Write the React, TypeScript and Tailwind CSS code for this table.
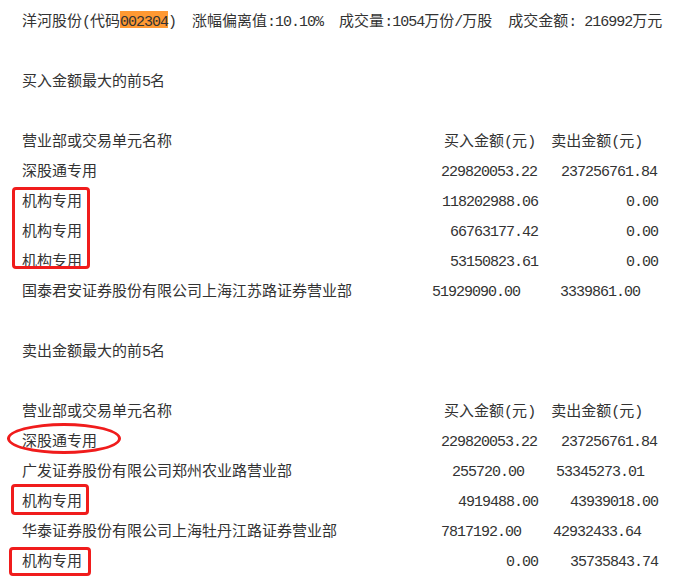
import React from 'react';

// width in "columns": CJK counts as two, ASCII as one
const units = (s: string) => [...s].reduce((n, ch) => n + (ch.charCodeAt(0) > 0x7f ? 2 : 1), 0);

const row = (name: string, buy: string, sell: string) =>
  name + ' '.repeat(65 - units(name) - buy.length) + buy + ' '.repeat(15 - sell.length) + sell;

const header = '营业部或交易单元名称' + ' '.repeat(34) + '买入金额(元)' + '  ' + '卖出金额(元)';

const buyTop = [
  ['深股通专用', '229820053.22', '237256761.84'],
  ['机构专用', '118202988.06', '0.00'],
  ['机构专用', '66763177.42', '0.00'],
  ['机构专用', '53150823.61', '0.00'],
  ['国泰君安证券股份有限公司上海江苏路证券营业部', '51929090.00', '3339861.00'],
];

const sellTop = [
  ['深股通专用', '229820053.22', '237256761.84'],
  ['广发证券股份有限公司郑州农业路营业部', '255720.00', '53345273.01'],
  ['机构专用', '4919488.00', '43939018.00'],
  ['华泰证券股份有限公司上海牡丹江路证券营业部', '7817192.00', '42932433.64'],
  ['机构专用', '0.00', '35735843.74'],
];

// half-width runs get a mono font squeezed to 8px per char, CJK stays 15px
const Mixed: React.FC<{ text: string }> = ({ text }) => (
  <>
    {text.split(/([\x00-\x7f]+)/).map((p, i) =>
      p === '' ? null : /^[\x00-\x7f]+$/.test(p) ? (
        <span key={i} className="font-['Liberation_Mono',monospace] text-[15px] tracking-[-1px]">
          {p}
        </span>
      ) : (
        <span key={i}>{p}</span>
      )
    )}
  </>
);

const Line: React.FC<{ text?: string; children?: React.ReactNode }> = ({ text, children }) => (
  <div className="h-[30px] leading-[30px] whitespace-pre">{text !== undefined ? <Mixed text={text} /> : children}</div>
);

const App: React.FC = () => {
  return (
    <div className="relative w-[682px] h-[587px] bg-white overflow-hidden">
      <div className="pl-[22px] pt-[5px] text-[15px] text-[#333] font-['Noto_Sans_CJK_SC',sans-serif]">
        <Line>
          <Mixed text="洋河股份(代码" />
          <span className="inline-block h-[17px] leading-[17px] bg-[#ff9933]">
            <Mixed text="002304" />
          </span>
          <Mixed text=")  涨幅偏离值:10.10%  成交量:1054万份/万股  成交金额: 216992万元" />
        </Line>
        <Line text="" />
        <Line text="买入金额最大的前5名" />
        <Line text="" />
        <Line text={header} />
        {buyTop.map((r, i) => (
          <Line key={'b' + i} text={row(r[0], r[1], r[2])} />
        ))}
        <Line text="" />
        <Line text="卖出金额最大的前5名" />
        <Line text="" />
        <Line text={header} />
        {sellTop.map((r, i) => (
          <Line key={'s' + i} text={row(r[0], r[1], r[2])} />
        ))}
      </div>

      {/* red annotations drawn over the text */}
      <div className="absolute left-[12px] top-[187px] w-[78px] h-[82px] border-[3px] border-[#f01c1c] rounded-[4px]" />
      <div className="absolute left-[7px] top-[423px] w-[114px] h-[31px] border-[3px] border-[#f01c1c] rounded-[50%]" />
      <div className="absolute left-[11px] top-[484px] w-[78px] h-[31px] border-[3px] border-[#f01c1c] rounded-[4px]" />
      <div className="absolute left-[9px] top-[547px] w-[82px] h-[29px] border-[3px] border-[#f01c1c] rounded-[4px]" />
    </div>
  );
};

export default App;
